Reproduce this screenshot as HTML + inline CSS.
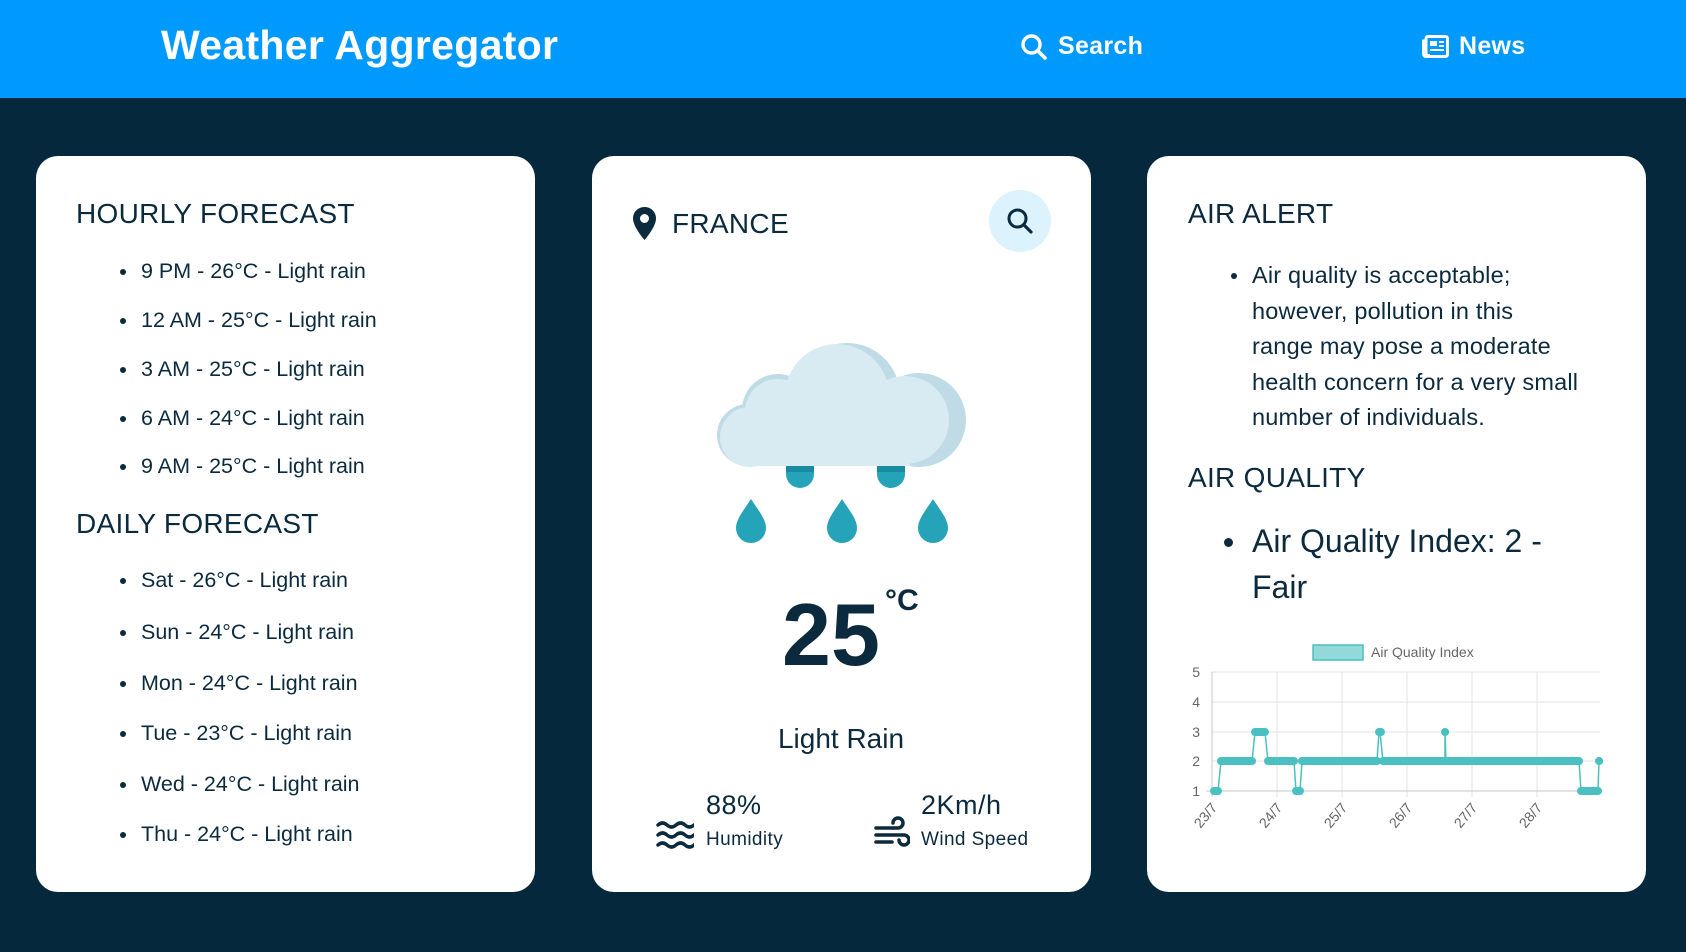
<!DOCTYPE html>
<html><head><meta charset="utf-8"><style>
*{margin:0;padding:0;box-sizing:border-box}
body{width:1686px;height:952px;background:#05283d;font-family:"Liberation Sans",sans-serif;color:#0b2a3d;position:relative;overflow:hidden}
.hdr{position:absolute;left:0;top:0;width:1686px;height:98px;background:#0099fe;color:#fff;font-weight:bold}
.abs{position:absolute;white-space:nowrap}
.card{position:absolute;top:156px;width:499px;height:736px;background:#fff;border-radius:22px}
h2{position:absolute;font-weight:normal;font-size:28px;letter-spacing:0.3px}
.li{position:absolute;font-size:21.5px;white-space:nowrap}
.li:before{content:"";position:absolute;left:-21px;top:10px;width:6px;height:6px;border-radius:50%;background:#0b2a3d}
</style></head><body>
<div class="hdr">
<div class="abs" style="left:161px;top:22px;font-size:41px;letter-spacing:0.3px">Weather Aggregator</div>
<svg class="abs" style="left:1020px;top:33px" width="28" height="28" viewBox="0 0 28 28"><circle cx="11.5" cy="11.5" r="8.5" fill="none" stroke="#fff" stroke-width="3.4"/><line x1="18" y1="18" x2="25" y2="25" stroke="#fff" stroke-width="3.6" stroke-linecap="round"/></svg>
<div class="abs" style="left:1058px;top:32px;font-size:25px;letter-spacing:0.3px">Search</div>
<svg class="abs" style="left:1422px;top:35px" width="27" height="23" viewBox="0 0 27 23"><rect x="4" y="1.5" width="21.5" height="20" rx="2" fill="none" stroke="#fff" stroke-width="3"/><path d="M4 6H1.5V19a2.5 2.5 0 0 0 5 0" fill="none" stroke="#fff" stroke-width="3"/><rect x="8" y="6" width="7" height="5" fill="#fff"/><rect x="17" y="6" width="5" height="2" fill="#fff"/><rect x="17" y="10" width="5" height="2" fill="#fff"/><rect x="8" y="14" width="14" height="2" fill="#fff"/></svg>
<div class="abs" style="left:1459px;top:32px;font-size:25px;letter-spacing:0.3px">News</div>
</div>

<div class="card" style="left:36px">
<h2 style="left:40px;top:42px">HOURLY FORECAST</h2>
<div class="li" style="left:105px;top:103px">9 PM - 26°C - Light rain</div>
<div class="li" style="left:105px;top:152px">12 AM - 25°C - Light rain</div>
<div class="li" style="left:105px;top:201px">3 AM - 25°C - Light rain</div>
<div class="li" style="left:105px;top:250px">6 AM - 24°C - Light rain</div>
<div class="li" style="left:105px;top:298px">9 AM - 25°C - Light rain</div>
<h2 style="left:40px;top:352px">DAILY FORECAST</h2>
<div class="li" style="left:105px;top:412px">Sat - 26°C - Light rain</div>
<div class="li" style="left:105px;top:464px">Sun - 24°C - Light rain</div>
<div class="li" style="left:105px;top:515px">Mon - 24°C - Light rain</div>
<div class="li" style="left:105px;top:565px">Tue - 23°C - Light rain</div>
<div class="li" style="left:105px;top:616px">Wed - 24°C - Light rain</div>
<div class="li" style="left:105px;top:666px">Thu - 24°C - Light rain</div>
</div>

<div class="card" style="left:592px">
<svg class="abs" style="left:40px;top:50px" width="25" height="35" viewBox="0 0 25 35"><path d="M12.5 1C6 1 1 6 1 12.5 1 21 12.5 34 12.5 34S24 21 24 12.5C24 6 19 1 12.5 1Z" fill="#0b2a3d"/><circle cx="12.5" cy="12.5" r="4.5" fill="#fff"/></svg>
<h2 style="left:80px;top:52px">FRANCE</h2>
<div class="abs" style="left:397px;top:34px;width:62px;height:62px;border-radius:50%;background:#dcf3fd"></div>
<svg class="abs" style="left:414px;top:51px" width="28" height="28" viewBox="0 0 28 28"><circle cx="11.5" cy="11.5" r="8.5" fill="none" stroke="#0b2a3d" stroke-width="3"/><line x1="18" y1="18" x2="25" y2="25" stroke="#0b2a3d" stroke-width="3.2" stroke-linecap="round"/></svg>
<svg class="abs" style="left:0;top:0" width="499" height="600" viewBox="592 156 499 600">
<g fill="#bfdbe6"><circle cx="847" cy="396" r="53"/><circle cx="919" cy="420" r="47"/><circle cx="778" cy="410" r="36"/><circle cx="748" cy="435" r="31"/></g>
<g fill="#d9ebf2"><circle cx="837" cy="396" r="52"/><circle cx="905" cy="420" r="44"/><circle cx="778" cy="412" r="33"/><circle cx="750" cy="437" r="30"/><rect x="750" y="410" width="160" height="56"/></g>
<g fill="#25a4b9"><path d="M786 466h28v8a14 14 0 1 1 -28 0z"/><path d="M877 466h28v8a14 14 0 1 1 -28 0z"/>
<path d="M751 499c-7 11-15 20-15 29a15 15 0 0 0 30 0c0-9-8-18-15-29z"/><path d="M842 499c-7 11-15 20-15 29a15 15 0 0 0 30 0c0-9-8-18-15-29z"/><path d="M933 499c-7 11-15 20-15 29a15 15 0 0 0 30 0c0-9-8-18-15-29z"/></g>
<g fill="#178ca1"><rect x="786" y="466" width="28" height="6"/><rect x="877" y="466" width="28" height="6"/></g>
</svg>
<div class="abs" style="left:190px;top:435px;font-size:88px;font-weight:bold;line-height:1">25</div>
<div class="abs" style="left:293px;top:428px;font-size:30px;font-weight:bold">°C</div>
<div class="abs" style="left:174px;top:567px;font-size:28px;width:150px;text-align:center">Light Rain</div>
<svg class="abs" style="left:64px;top:664px" width="38" height="30" viewBox="0 0 38 30"><g fill="none" stroke="#0b2a3d" stroke-width="3.5" stroke-linecap="round"><path d="M2 5q4.5-4 9 0t9 0 9 0 9 0"/><path d="M2 15q4.5-4 9 0t9 0 9 0 9 0"/><path d="M2 25q4.5-4 9 0t9 0 9 0 9 0"/></g></svg>
<div class="abs" style="left:114px;top:634px;font-size:27px;letter-spacing:0.5px">88%</div>
<div class="abs" style="left:114px;top:673px;font-size:19px;letter-spacing:0.4px">Humidity</div>
<svg class="abs" style="left:282px;top:660px" width="36" height="36" viewBox="0 0 36 36"><g fill="none" stroke="#0b2a3d" stroke-width="3.5" stroke-linecap="round"><path d="M2 12h22a5 5 0 1 0 -5-5"/><path d="M2 19h28a5 5 0 1 1 -5 5"/><path d="M2 26h16"/></g></svg>
<div class="abs" style="left:329px;top:634px;font-size:27px;letter-spacing:0.5px">2Km/h</div>
<div class="abs" style="left:329px;top:673px;font-size:19px;letter-spacing:0.4px">Wind Speed</div>
</div>

<div class="card" style="left:1147px">
<h2 style="left:41px;top:42px">AIR ALERT</h2>
<div class="li" style="left:105px;top:102px;font-size:23.5px;line-height:35.6px;white-space:normal;width:328px;letter-spacing:0.2px">Air quality is acceptable; however, pollution in this range may pose a moderate health concern for a very small number of individuals.</div>
<h2 style="left:41px;top:306px">AIR QUALITY</h2>
<div class="li" style="left:105px;top:362px;font-size:32px;line-height:46px;white-space:normal;width:330px">Air Quality Index: 2 - Fair</div>
</div>
<style>.li[style*="32px"]:before{top:20px;width:9px;height:9px;left:-28px}.li[style*="23.5px"]:before{top:15px}</style>

<svg class="abs" style="left:0;top:0" width="1686" height="952" viewBox="0 0 1686 952" font-family="Liberation Sans,sans-serif">
<rect x="1313" y="645" width="50" height="15" fill="#93d9d9" stroke="#4bc0c0" stroke-width="1.5"/>
<text x="1371" y="657" font-size="14" fill="#666">Air Quality Index</text>
<g stroke="#e3e3e3" stroke-width="1">
<line x1="1212" y1="672" x2="1600" y2="672"/><line x1="1212" y1="702" x2="1600" y2="702"/><line x1="1212" y1="732" x2="1600" y2="732"/><line x1="1212" y1="761" x2="1600" y2="761"/>
<line x1="1277" y1="672" x2="1277" y2="797"/><line x1="1342" y1="672" x2="1342" y2="797"/><line x1="1407" y1="672" x2="1407" y2="797"/><line x1="1472" y1="672" x2="1472" y2="797"/><line x1="1537" y1="672" x2="1537" y2="797"/>
</g>
<g stroke="#c8c8c8"><line x1="1212" y1="672" x2="1212" y2="797"/><line x1="1206" y1="791" x2="1600" y2="791"/></g>
<g font-size="14" fill="#666" text-anchor="end"><text x="1200" y="677">5</text><text x="1200" y="707">4</text><text x="1200" y="737">3</text><text x="1200" y="766">2</text><text x="1200" y="796">1</text></g>
<g font-size="14" fill="#666" text-anchor="end">
<text transform="translate(1218,808) rotate(-50)">23/7</text><text transform="translate(1283,808) rotate(-50)">24/7</text><text transform="translate(1348,808) rotate(-50)">25/7</text><text transform="translate(1413,808) rotate(-50)">26/7</text><text transform="translate(1478,808) rotate(-50)">27/7</text><text transform="translate(1543,808) rotate(-50)">28/7</text></g>
<polyline fill="none" stroke="#4bc0c0" stroke-width="1.5" points="1214,791 1218,791 1221,761 1252,761 1255,732 1265,732 1268,761 1294,761 1296,791 1300,791 1302,761 1377,761 1379,732 1380,732 1383,761 1445,761 1445,732 1446,761 1579,761 1581,791 1598,791 1599,761"/>
<g stroke="#4bc0c0" stroke-width="8" stroke-linecap="round" fill="none">
<path d="M1214 791H1218M1221 761H1252M1255 732H1265M1268 761H1294M1296 791H1300M1302 761H1377M1379 732H1381M1383 761H1579M1581 791H1598"/>
<path d="M1445 732h0.1M1599 761h0.1"/></g>
</svg>
</body></html>
